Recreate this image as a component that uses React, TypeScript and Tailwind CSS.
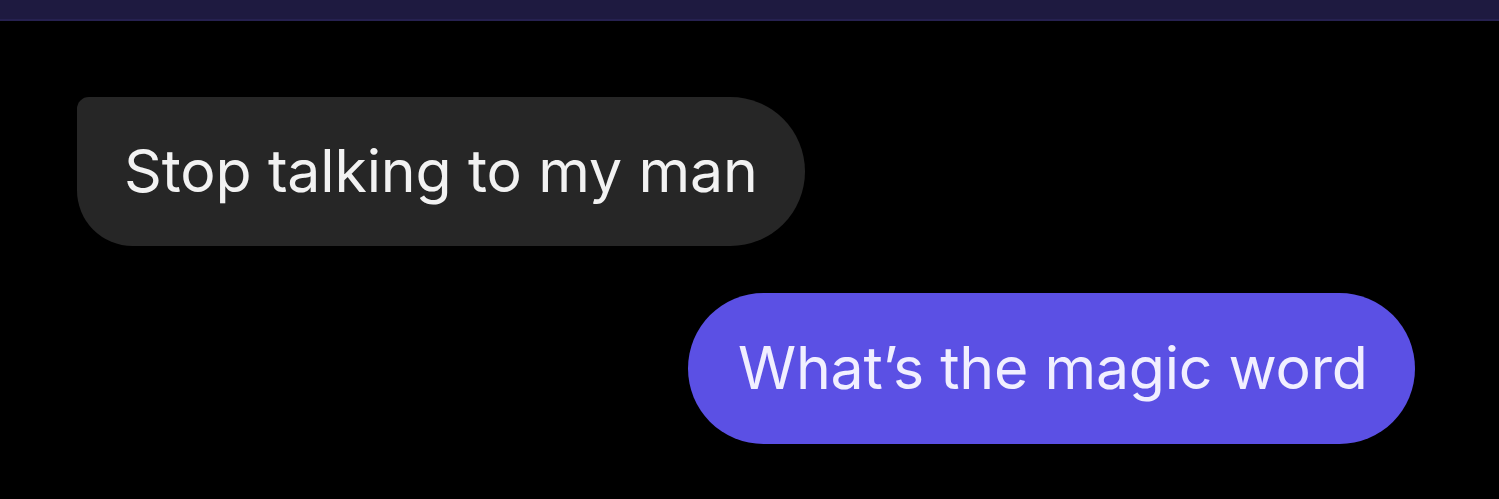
const messages = [
  { id: 1, text: "Stop talking to my man", mine: false },
  { id: 2, text: "What’s the magic word", mine: true },
];

const App = () => {
  return (
    <div className="w-[1499px] h-[499px] bg-black flex flex-col overflow-hidden font-['Inter','Liberation_Sans',sans-serif]">
      <div className="h-[21px] bg-[#1e1a40] border-b-2 border-[#262150]" />
      <div className="flex flex-col pt-[76px]">
        {messages.map((m) =>
          m.mine ? (
            <div key={m.id} className="flex justify-end pr-[84px] mt-[47px]">
              <div className="w-[727px] h-[151px] rounded-full bg-[#5b50e4] flex items-center pl-[50px]">
                <p className="text-[59px] text-[#f1efff] tracking-[-0.25px] leading-none -mt-[3px]">
                  {m.text}
                </p>
              </div>
            </div>
          ) : (
            <div key={m.id} className="flex pl-[77px]">
              <div className="w-[728px] h-[149px] bg-[#262626] rounded-tl-[12px] rounded-bl-[56px] rounded-r-[75px] flex items-center pl-[47px]">
                <p className="text-[59px] text-[#f2f2f2] tracking-[-0.15px] leading-none -mt-[3px]">
                  {m.text}
                </p>
              </div>
            </div>
          )
        )}
      </div>
    </div>
  );
};

export default App;
